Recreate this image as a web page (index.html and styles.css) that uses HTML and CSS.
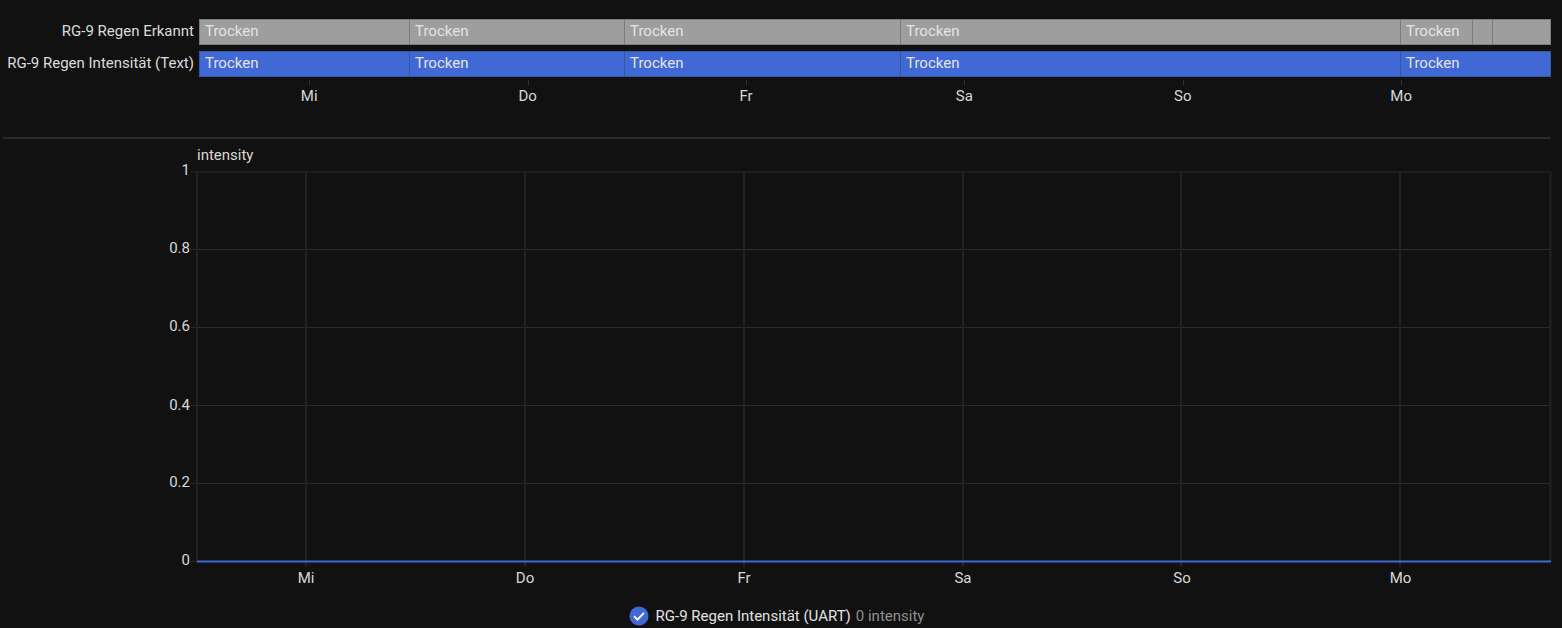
FILE: index.html
```html
<!DOCTYPE html>
<html lang="en">
<head>
    <meta charset="UTF-8">
    <meta name="viewport" content="width=device-width, initial-scale=1.0">
    <title>RG-9 Regen</title>
    <link rel="stylesheet" href="styles.css">
</head>
<body>

    <!-- Timeline -->
    <div class="timeline">
        <div class="timeline-row">
            <div class="row-label">RG-9 Regen Erkannt</div>
            <div class="bar bar-grey">
                <div class="segment" style="width: 210px">Trocken</div>
                <div class="segment" style="width: 215px">Trocken</div>
                <div class="segment" style="width: 276px">Trocken</div>
                <div class="segment" style="width: 500px">Trocken</div>
                <div class="segment" style="width: 72px">Trocken</div>
                <div class="segment" style="width: 20px"></div>
                <div class="segment" style="width: 59px"></div>
            </div>
        </div>
        <div class="timeline-row">
            <div class="row-label">RG-9 Regen Intensität (Text)</div>
            <div class="bar bar-blue">
                <div class="segment" style="width: 210px">Trocken</div>
                <div class="segment" style="width: 215px">Trocken</div>
                <div class="segment" style="width: 276px">Trocken</div>
                <div class="segment" style="width: 500px">Trocken</div>
                <div class="segment" style="width: 151px">Trocken</div>
            </div>
        </div>
        <div class="day-axis">
            <div class="day">Mi</div>
            <div class="day">Do</div>
            <div class="day">Fr</div>
            <div class="day">Sa</div>
            <div class="day">So</div>
            <div class="day">Mo</div>
        </div>
    </div>

    <div class="separator"></div>

    <!-- Chart -->
    <svg class="chart" viewBox="0 139 1562 461" width="1562" height="461">
        <g class="grid-h">
            <line x1="191" y1="172" x2="1551" y2="172"></line>
            <line x1="191" y1="249.5" x2="1551" y2="249.5"></line>
            <line x1="191" y1="327.5" x2="1551" y2="327.5"></line>
            <line x1="191" y1="405.5" x2="1551" y2="405.5"></line>
            <line x1="191" y1="483.5" x2="1551" y2="483.5"></line>
            <line x1="191" y1="561.5" x2="1551" y2="561.5"></line>
        </g>
        <g class="grid-v">
            <line x1="197" y1="172" x2="197" y2="562"></line>
            <line x1="306" y1="172" x2="306" y2="567"></line>
            <line x1="525" y1="172" x2="525" y2="567"></line>
            <line x1="744" y1="172" x2="744" y2="567"></line>
            <line x1="963" y1="172" x2="963" y2="567"></line>
            <line x1="1181" y1="172" x2="1181" y2="567"></line>
            <line x1="1400" y1="172" x2="1400" y2="567"></line>
            <line x1="1550.5" y1="172" x2="1550.5" y2="562"></line>
        </g>
        <line class="series" x1="197" y1="561.5" x2="1551" y2="561.5"></line>
        <text class="axis-name" x="197" y="160">intensity</text>
        <g class="y-labels">
            <text x="190" y="175">1</text>
            <text x="190" y="253">0.8</text>
            <text x="190" y="331">0.6</text>
            <text x="190" y="409.5">0.4</text>
            <text x="190" y="487">0.2</text>
            <text x="190" y="565">0</text>
        </g>
        <g class="x-labels">
            <text x="306" y="583">Mi</text>
            <text x="525" y="583">Do</text>
            <text x="744" y="583">Fr</text>
            <text x="963" y="583">Sa</text>
            <text x="1182" y="583">So</text>
            <text x="1400.5" y="583">Mo</text>
        </g>
    </svg>

    <!-- Legend -->
    <div class="legend">
        <svg class="legend-check" viewBox="0 0 20 20" width="20" height="20">
            <circle cx="10" cy="10" r="9.5" fill="#4169d6"></circle>
            <path d="M5 10.2l3.4 3.4 6.6-6.8" fill="none" stroke="#fff" stroke-width="1.9"></path>
        </svg>
        <span class="legend-name">RG-9 Regen Intensität (UART)</span>
        <span class="legend-value">0 intensity</span>
    </div>

</body>
</html>
```

FILE: styles.css
```css
body {
    font-family: Roboto, sans-serif;
    font-size: 15px;
    background-color: #111111;
    color: #e1e1e1;
    margin: 0;
    padding: 0;
    height: 628px;
    overflow: hidden;
}
.timeline {
    padding-top: 19px;
    height: 119px;
    box-sizing: border-box;
}
.timeline-row {
    display: flex;
    height: 26px;
    margin-bottom: 6px;
}
.row-label {
    width: 194px;
    text-align: right;
    line-height: 24px;
    color: #dcdcdc;
}
.bar {
    display: flex;
    margin-left: 5px;
    width: 1352px;
    box-sizing: border-box;
}
.segment {
    box-sizing: border-box;
    padding-left: 5px;
    line-height: 23px;
    border: 1px solid;
    border-right-width: 0;
    color: #e4e4e4;
}
.segment:last-child {
    border-right-width: 1px;
}
.bar-grey .segment {
    background-color: #9e9e9e;
    border-color: #7b7b7b;
}
.bar-blue .segment {
    background-color: #4169d6;
    border-color: #36569f;
}
.day-axis {
    display: grid;
    grid-template-columns: repeat(6, 218.4px);
    margin-left: 200px;
    margin-top: -3px;
}
.day {
    text-align: center;
    padding-top: 6px;
    line-height: 20px;
    color: #d8d8d8;
    position: relative;
}
.day::before {
    content: "";
    position: absolute;
    top: 0;
    left: 50%;
    width: 1px;
    height: 5px;
    background-color: #333333;
}
.separator {
    height: 2px;
    margin: 18px 11px 0 3px;
    background-color: #2b2b2b;
}
.chart {
    display: block;
}
.grid-h line {
    stroke: #2a2a2a;
    stroke-width: 1;
}
.grid-v line {
    stroke: #222222;
    stroke-width: 2;
}
.series {
    stroke: #4169d6;
    stroke-width: 2;
}
.chart text {
    font-family: Roboto, sans-serif;
    font-size: 15px;
    fill: #d8d8d8;
}
.y-labels text {
    text-anchor: end;
}
.x-labels text {
    text-anchor: middle;
}
.legend {
    display: flex;
    align-items: center;
    justify-content: center;
    gap: 5px;
    margin-top: 6px;
    padding-right: 9px;
    height: 20px;
}
.legend-check {
    margin-right: 2px;
}
.legend-name {
    color: #e1e1e1;
}
.legend-value {
    color: #8f8f8f;
}
```
